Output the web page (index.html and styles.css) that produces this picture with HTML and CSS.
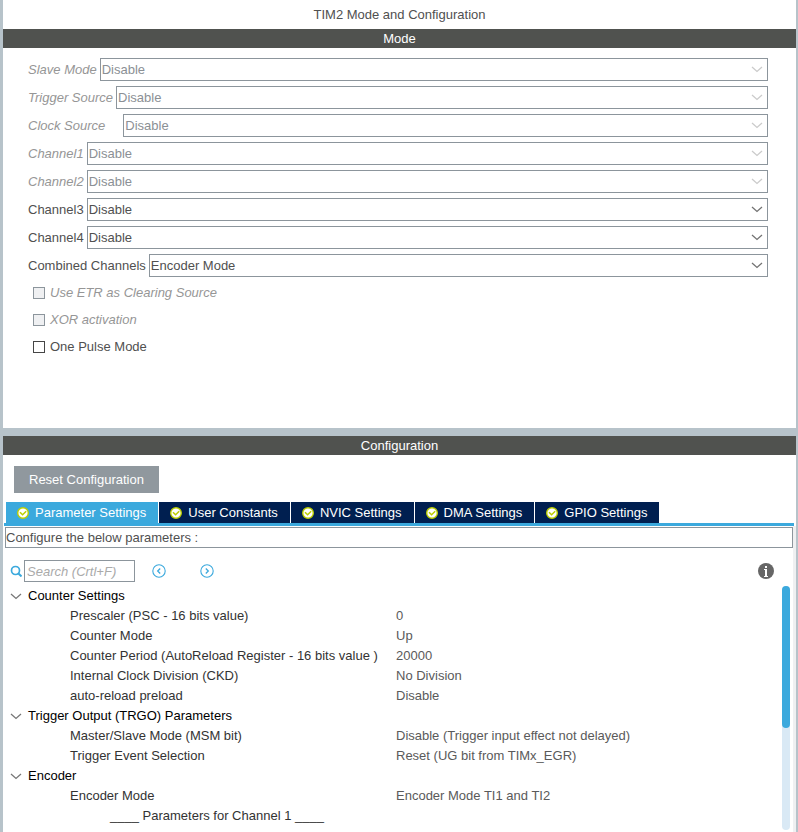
FILE: index.html
```html
<!DOCTYPE html>
<html lang="en">
<head>
<meta charset="utf-8">
<meta name="viewport" content="width=device-width, initial-scale=1">
<title>TIM2 Mode and Configuration</title>
<link rel="stylesheet" href="styles.css">
</head>
<body>
<svg class="defs" aria-hidden="true">
  <symbol id="chevron" viewBox="0 0 12 7"><path d="M1 1L6 5.5L11 1" fill="none" stroke="currentColor" stroke-width="1.3"/></symbol>
  <symbol id="check" viewBox="0 0 12 12"><circle cx="6" cy="6" r="5.3" fill="#fff" stroke="#bccf00" stroke-width="1.4"/><path d="M3 5.2L5.6 7.8L9.2 4.2" fill="none" stroke="#bccf00" stroke-width="1.5"/></symbol>
</svg>
<main class="app">
  <section class="panel mode">
    <h1 class="title">TIM2 Mode and Configuration</h1>
    <h2 class="bar">Mode</h2>
    <form class="fields">
      <div class="field off"><label for="slave">Slave Mode</label><span class="pick"><select id="slave" disabled><option>Disable</option></select><svg><use href="#chevron"/></svg></span></div>
      <div class="field off"><label for="trigger">Trigger Source</label><span class="pick"><select id="trigger" disabled><option>Disable</option></select><svg><use href="#chevron"/></svg></span></div>
      <div class="field off spaced"><label for="clock">Clock Source</label><span class="pick"><select id="clock" disabled><option>Disable</option></select><svg><use href="#chevron"/></svg></span></div>
      <div class="field off"><label for="ch1">Channel1</label><span class="pick"><select id="ch1" disabled><option>Disable</option></select><svg><use href="#chevron"/></svg></span></div>
      <div class="field off"><label for="ch2">Channel2</label><span class="pick"><select id="ch2" disabled><option>Disable</option></select><svg><use href="#chevron"/></svg></span></div>
      <div class="field"><label for="ch3">Channel3</label><span class="pick"><select id="ch3"><option>Disable</option></select><svg><use href="#chevron"/></svg></span></div>
      <div class="field"><label for="ch4">Channel4</label><span class="pick"><select id="ch4"><option>Disable</option></select><svg><use href="#chevron"/></svg></span></div>
      <div class="field"><label for="combined">Combined Channels</label><span class="pick"><select id="combined"><option>Encoder Mode</option></select><svg><use href="#chevron"/></svg></span></div>
      <div class="checks">
        <label class="check off"><input type="checkbox" disabled>Use ETR as Clearing Source</label>
        <label class="check off"><input type="checkbox" disabled>XOR activation</label>
        <label class="check"><input type="checkbox">One Pulse Mode</label>
      </div>
    </form>
  </section>
  <section class="panel config">
    <h2 class="bar">Configuration</h2>
    <button class="reset" type="button">Reset Configuration</button>
    <nav class="tabs">
      <button class="tab active" type="button"><svg><use href="#check"/></svg>Parameter Settings</button>
      <button class="tab" type="button"><svg><use href="#check"/></svg>User Constants</button>
      <button class="tab" type="button"><svg><use href="#check"/></svg>NVIC Settings</button>
      <button class="tab" type="button"><svg><use href="#check"/></svg>DMA Settings</button>
      <button class="tab" type="button"><svg><use href="#check"/></svg>GPIO Settings</button>
    </nav>
    <div class="sheet">
      <p class="hint">Configure the below parameters :</p>
      <div class="tools">
        <label class="lens" for="search" aria-label="Search"><svg viewBox="0 0 12 12"><circle cx="5.5" cy="5.5" r="4" fill="none" stroke="currentColor" stroke-width="1.7"/><path d="M8.2 8.2L11.5 11.5" stroke="currentColor" stroke-width="2"/></svg></label>
        <input class="search" id="search" type="text" placeholder="Search (Crtl+F)">
        <button class="step" type="button" aria-label="Previous"><svg viewBox="0 0 14 14"><circle cx="7" cy="7" r="6.2" fill="none" stroke="currentColor" stroke-width="1.1"/><path d="M8.2 4.5L5.7 7L8.2 9.5" fill="none" stroke="currentColor" stroke-width="1.3"/></svg></button>
        <button class="step" type="button" aria-label="Next"><svg viewBox="0 0 14 14"><circle cx="7" cy="7" r="6.2" fill="none" stroke="currentColor" stroke-width="1.1"/><path d="M5.8 4.5L8.3 7L5.8 9.5" fill="none" stroke="currentColor" stroke-width="1.3"/></svg></button>
        <button class="info" type="button" aria-label="Information"><svg viewBox="0 0 16 16"><circle cx="8" cy="8" r="8" fill="#666"/><path d="M7 3H9V5H7ZM6 6H9V13H10V14H6V13H7V7H6Z" fill="#fff"/></svg></button>
      </div>
      <div class="tree">
        <table>
          <tbody>
            <tr class="group"><th colspan="2"><button type="button"><svg><use href="#chevron"/></svg>Counter Settings</button></th></tr>
            <tr><td>Prescaler (PSC - 16 bits value)</td><td>0</td></tr>
            <tr><td>Counter Mode</td><td>Up</td></tr>
            <tr><td>Counter Period (AutoReload Register - 16 bits value )</td><td>20000</td></tr>
            <tr><td>Internal Clock Division (CKD)</td><td>No Division</td></tr>
            <tr><td>auto-reload preload</td><td>Disable</td></tr>
          </tbody>
          <tbody>
            <tr class="group"><th colspan="2"><button type="button"><svg><use href="#chevron"/></svg>Trigger Output (TRGO) Parameters</button></th></tr>
            <tr><td>Master/Slave Mode (MSM bit)</td><td>Disable (Trigger input effect not delayed)</td></tr>
            <tr><td>Trigger Event Selection</td><td>Reset (UG bit from TIMx_EGR)</td></tr>
          </tbody>
          <tbody>
            <tr class="group"><th colspan="2"><button type="button"><svg><use href="#chevron"/></svg>Encoder</button></th></tr>
            <tr><td>Encoder Mode</td><td>Encoder Mode TI1 and TI2</td></tr>
            <tr class="sub"><td>____ Parameters for Channel 1 ____</td><td></td></tr>
          </tbody>
        </table>
        <div class="track"><div class="thumb"></div></div>
      </div>
    </div>
  </section>
</main>
</body>
</html>
```

FILE: styles.css
```css
* { box-sizing: border-box; }

body {
  margin: 0;
  background: #b7c3ca;
  color: #505050;
  font: 13px/20px "Liberation Sans", Arial, sans-serif;
}

button, input, select { font: inherit; color: inherit; margin: 0; }
button { border: 0; padding: 0; background: none; }
svg { display: block; flex: none; }
.defs { position: absolute; width: 0; height: 0; }

.app {
  display: flex;
  flex-direction: column;
  gap: 8px;
  min-height: 100vh;
  padding: 0 2px 0 3px;
}

.panel { background: #fff; }
.mode { padding-bottom: 68px; }

.title, .bar {
  margin: 0;
  font-size: 13px;
  font-weight: normal;
  text-align: center;
}
.title { line-height: 29px; }
.bar { background: #50524f; color: #fff; line-height: 19px; }

.fields {
  display: flex;
  flex-direction: column;
  gap: 5px;
  padding: 10px 28px 0 25px;
}
.field { display: flex; align-items: center; gap: 3px; }
.spaced { gap: 18px; }
.off { color: #969696; }
.off label, label.off { font-style: italic; }

.pick { position: relative; flex: 1; }
.pick select {
  display: block;
  width: 100%;
  height: 23px;
  padding: 0 1px;
  border: 1px solid #8c959c;
  border-radius: 0;
  background: #fff;
  appearance: none;
  opacity: 1;
}
.off select { color: #8b9095; }
.pick svg {
  position: absolute;
  right: 5px;
  top: 8px;
  width: 12px;
  height: 7px;
  color: #737373;
  pointer-events: none;
}
.off svg { color: #cbcbcb; }

.checks { margin-top: -3px; padding-left: 5px; }
.check { display: flex; align-items: center; gap: 5px; height: 27px; }
.check input {
  width: 12px;
  height: 12px;
  border: 1px solid #464646;
  background: #fff;
  appearance: none;
}
.check.off input { border-color: #8c959c; background: #eff0f2; }

.config { flex: 1; display: flex; flex-direction: column; align-items: stretch; }
.reset {
  align-self: flex-start;
  margin: 11px 11px 9px;
  padding: 0 15px;
  background: #90989e;
  color: #fff;
  line-height: 27px;
}

.tabs {
  display: flex;
  gap: 1px;
  margin: 0 2px 0 1px;
  padding-left: 2px;
  border-bottom: 3px solid #3ba9dd;
}
.tab {
  display: flex;
  align-items: center;
  gap: 6px;
  padding: 0 12px 0 11px;
  background: #001f50;
  color: #fff;
  line-height: 21px;
}
.tab svg { width: 12px; height: 12px; }
.active { background: #3ba9dd; }

.sheet {
  flex: 1;
  display: flex;
  flex-direction: column;
  padding: 1px 0 0 2px;
  border-right: 3px solid #eff0f2;
}
.hint { margin: 0; border: 1px solid #8c959c; line-height: 19px; }

.tools { display: flex; align-items: center; padding: 12px 19px 4px 5px; color: #3ba9dd; }
.lens svg { width: 12px; height: 12px; }
.search {
  width: 111px;
  height: 22px;
  margin: 0 17px 0 2px;
  padding: 0 2px;
  border: 1px solid #8c959c;
  color: #464646;
}
.search::placeholder { color: #aaa; font-style: italic; opacity: 1; }
.step { margin-right: 34px; }
.step svg { width: 14px; height: 14px; }
.info { margin-left: auto; }
.info svg { width: 16px; height: 16px; }

.tree {
  flex: 1;
  display: flex;
  align-items: stretch;
  justify-content: space-between;
  padding: 0 3px 2px 5px;
}
table { flex: 1; align-self: flex-start; border-collapse: collapse; table-layout: auto; }
th, td { height: 20px; padding: 0; text-align: left; font-weight: normal; white-space: nowrap; }
td:first-child { width: 386px; padding-left: 60px; color: #333; }
td { color: #5a5a5a; }
.sub td:first-child { padding-left: 100px; }
.group button { display: flex; align-items: center; gap: 6px; color: #000; }
.group svg { width: 12px; height: 7px; color: #777; }

.track { width: 8px; border-radius: 4px; background: #d9e9f5; }
.thumb { height: 58%; border-radius: 4px; background: #3ba9dd; }
```
